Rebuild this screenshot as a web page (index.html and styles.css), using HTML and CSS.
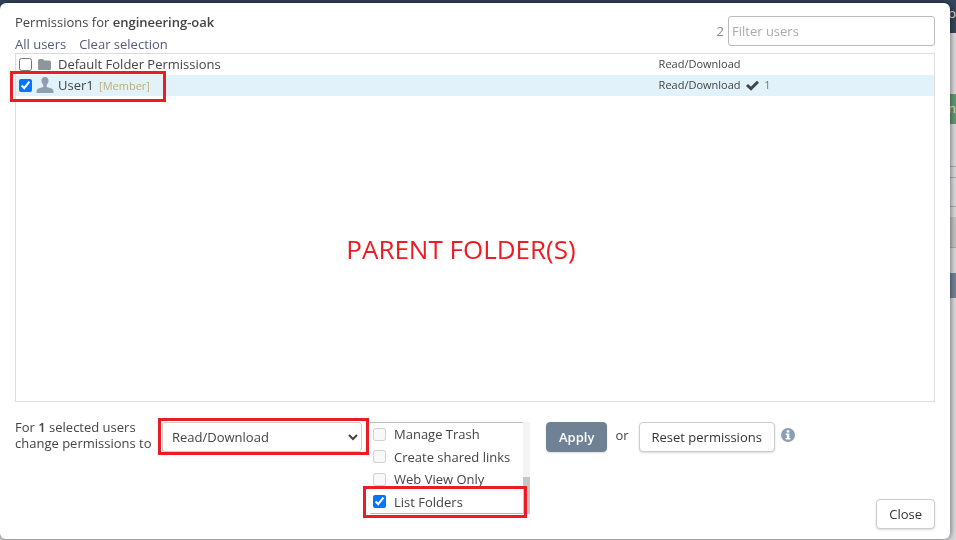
FILE: index.html
```html
<!DOCTYPE html>
<html lang="en">
<head>
    <meta charset="UTF-8">
    <meta name="viewport" content="width=device-width, initial-scale=1.0">
    <title>Folder Permissions</title>
    <link rel="stylesheet" href="styles.css">
</head>
<body>
    <!-- Page behind the dialog -->
    <div class="page" aria-hidden="true">
        <div class="page-header">o</div>
        <div class="page-action">n</div>
        <div class="page-line"></div>
        <div class="page-panel"></div>
        <div class="page-toolbar"></div>
        <div class="page-button"></div>
    </div>

    <div class="modal" role="dialog" aria-labelledby="modalTitle">
        <div class="modal-header">
            <div>
                <div class="title" id="modalTitle">Permissions for <strong>engineering-oak</strong></div>
                <div class="links">
                    <a href="#">All users</a>
                    <a href="#">Clear selection</a>
                </div>
            </div>
            <div class="filter">
                <label for="filterUsers">2</label>
                <input type="text" id="filterUsers" placeholder="Filter users">
            </div>
        </div>

        <div class="user-list">
            <table>
                <tr>
                    <td class="user">
                        <label class="user-label">
                            <input type="checkbox">
                            <svg class="user-icon" viewBox="0 0 18 18">
                                <path fill="#8c979c" d="M2 4.500Q2 3 3.500 3H6.500Q8 3 8 4.500H13.500Q15 4.500 15 6V12.500Q15 14 13.500 14H3.500Q2 14 2 12.500Z"/>
                            </svg>
                            <span class="name">Default Folder Permissions</span>
                        </label>
                    </td>
                    <td class="access">Read/Download</td>
                </tr>
                <tr class="selected">
                    <td class="user">
                        <label class="user-label">
                            <input type="checkbox" checked>
                            <svg class="user-icon" viewBox="0 0 18 18">
                                <path fill="#909fb0" d="M9 0C11.500 0 12.700 1.700 12.500 4C12.400 5.800 11.500 7 10.700 7.800V10L15.500 11.600Q17.500 12.300 17.500 14.500V16H.5V14.500Q.5 12.300 2.500 11.600L7.300 10V7.800C6.500 7 5.600 5.800 5.500 4C5.300 1.700 6.500 0 9 0Z"/>
                            </svg>
                            <span class="name">User1 <small class="role">[Member]</small></span>
                        </label>
                        <span class="mark mark-user"></span>
                    </td>
                    <td class="access">Read/Download
                        <svg class="tick" viewBox="0 0 14 12">
                            <path d="M2 5L6 8.700L13 1.700" fill="none" stroke="#444" stroke-width="3"/>
                        </svg>
                        <span class="count">1</span>
                    </td>
                </tr>
            </table>
            <div class="caption">PARENT FOLDER(S)</div>
        </div>

        <div class="controls">
            <label class="change-label" for="permission">For <strong>1</strong> selected users<br>change permissions to</label>
            <div class="select-wrap">
                <select id="permission">
                    <option>Read/Download</option>
                </select>
                <span class="mark mark-select"></span>
            </div>
            <div class="options">
                <div class="options-list">
                    <label><input type="checkbox" disabled>Manage Trash</label>
                    <label><input type="checkbox" disabled>Create shared links</label>
                    <label><input type="checkbox" disabled>Web View Only</label>
                    <label><input type="checkbox" checked>List Folders</label>
                </div>
                <div class="scrollbar"><div class="thumb"></div></div>
                <span class="mark mark-option"></span>
            </div>
            <button class="btn btn-primary">Apply</button>
            <span class="or">or</span>
            <button class="btn">Reset permissions</button>
            <svg class="info" viewBox="0 0 14 14">
                <circle cx="7" cy="7" r="7" fill="#8c9fb2"/>
                <path fill="#fff" d="M5.700 2.200H8.300V4.500H5.700ZM4.700 5.500H8.300V10H9.400V11.500H4.700V10H5.800V7H4.700Z"/>
            </svg>
        </div>

        <div class="modal-footer">
            <button class="btn">Close</button>
        </div>
    </div>
</body>
</html>
```

FILE: styles.css
```css
* {
    box-sizing: border-box;
}

body {
    margin: 0;
    min-height: 100vh;
    font-family: 'Open Sans', sans-serif;
    font-size: 13px;
    color: #444;
    background-color: #d9d9dc;
}

strong {
    font-weight: 600;
}

/* Page behind the dialog */
.page {
    text-align: right;
    color: #ddd;
}

.page-header {
    height: 33px;
    line-height: 26px;
    background-color: #34465e;
}

.page-action {
    height: 30px;
    line-height: 28px;
    margin-top: 61px;
    background-color: #5f9a70;
}

.page-line {
    height: 43px;
    border-bottom: 1px solid #aaa;
}

.page-panel {
    height: 30px;
    margin-top: 10px;
    border-top: 1px solid #aaa;
    border-bottom: 1px solid #aaa;
}

.page-toolbar {
    height: 31px;
    margin-top: 10px;
    background-color: #c2c2c3;
    border-bottom: 1px solid #aaa;
}

.page-button {
    height: 25px;
    margin-top: 25px;
    background-color: #71829a;
}

/* Dialog */
.modal {
    position: fixed;
    inset: 3px 6px 1px 0;
    display: flex;
    flex-direction: column;
    padding: 8px 15px 10px;
    background-color: #fff;
    border-radius: 6px;
    box-shadow: 0 0 6px rgba(0, 0, 0, 0.6);
}

.modal-header {
    display: flex;
    justify-content: space-between;
    align-items: flex-start;
    height: 42px;
}

.title,
.links {
    line-height: 22px;
}

.links {
    display: flex;
    gap: 13px;
}

.links a {
    color: #535a7d;
    text-decoration: none;
}

.filter {
    display: flex;
    align-items: center;
    gap: 4px;
    margin-top: 5px;
    color: #888;
}

.filter input {
    width: 207px;
    height: 30px;
    padding: 0 3px;
    font: inherit;
    border: 1px solid #bbb;
    border-radius: 3px;
}

.filter input::placeholder {
    color: #aaa;
}

.user-list {
    flex: 1;
    display: flex;
    flex-direction: column;
    border: 1px solid #ddd;
}

table {
    width: 100%;
    border-collapse: collapse;
    table-layout: fixed;
}

td {
    height: 21px;
    padding: 0;
}

.user {
    position: relative;
    width: 70%;
}

.user-label {
    display: flex;
    align-items: center;
    height: 21px;
    padding-left: 3px;
}

input[type="checkbox"] {
    width: 13px;
    height: 13px;
    margin: 0;
}

.user-icon {
    width: 18px;
    height: 18px;
    margin: 0 4px;
}

.name,
.access {
    padding-bottom: 2px;
}

.role {
    margin-left: 2px;
    font-size: 11px;
    color: #c0ad72;
}

.access {
    font-size: 11px;
}

.selected {
    background-color: #e1f2fa;
}

.tick {
    width: 14px;
    height: 12px;
    margin: 0 2px;
    vertical-align: middle;
}

.count {
    color: #777;
}

.caption {
    flex: 1;
    display: flex;
    align-items: center;
    justify-content: center;
    padding-right: 28px;
    font-size: 26px;
    color: #ed1c24;
}

.controls {
    display: flex;
    align-items: flex-start;
    margin-top: 20px;
}

.change-label {
    width: 147px;
    line-height: 16px;
    margin-top: -3px;
}

.select-wrap {
    position: relative;
    margin-right: 8px;
}

select {
    display: block;
    width: 200px;
    height: 30px;
    padding: 0 5px;
    font: inherit;
    color: #444;
    background-color: #fff;
    border: 1px solid #ccc;
    border-radius: 3px;
}

.options {
    position: relative;
    display: flex;
    width: 160px;
    height: 92px;
    margin-right: 16px;
}

.options-list {
    flex: 1;
    display: grid;
    grid-template-rows: repeat(4, 1fr);
    border-top: 1px solid #bbb;
    border-bottom: 1px solid #bbb;
}

.options-list label {
    display: flex;
    align-items: center;
    gap: 8px;
    padding-left: 3px;
}

.scrollbar {
    display: flex;
    align-items: flex-end;
    width: 7px;
    background-color: #f4f4f4;
}

.thumb {
    width: 100%;
    height: 37px;
    background-color: #c6c6c6;
}

.btn {
    height: 30px;
    padding: 0 12px;
    font: inherit;
    color: #333;
    background-color: #fff;
    border: 1px solid #ccc;
    border-radius: 4px;
    box-shadow: 0 1px 2px rgba(0, 0, 0, 0.15);
}

.btn-primary {
    font-weight: 600;
    color: #fff;
    background-color: #708196;
    border-color: #708196;
}

.or {
    margin: 0 10px 0 8px;
    line-height: 26px;
}

.info {
    width: 14px;
    height: 14px;
    margin: 6px;
}

.modal-footer {
    display: flex;
    justify-content: flex-end;
    margin-top: -15px;
}

/* Red highlight frames */
.mark {
    position: absolute;
    border: 3px solid #ed1c24;
    pointer-events: none;
}

.mark-user {
    top: -4px;
    left: -6px;
    width: 156px;
    height: 31px;
}

.mark-select {
    inset: -4px -7px -3px -4px;
}

.mark-option {
    inset: 64px 3px -4px -7px;
}
```
